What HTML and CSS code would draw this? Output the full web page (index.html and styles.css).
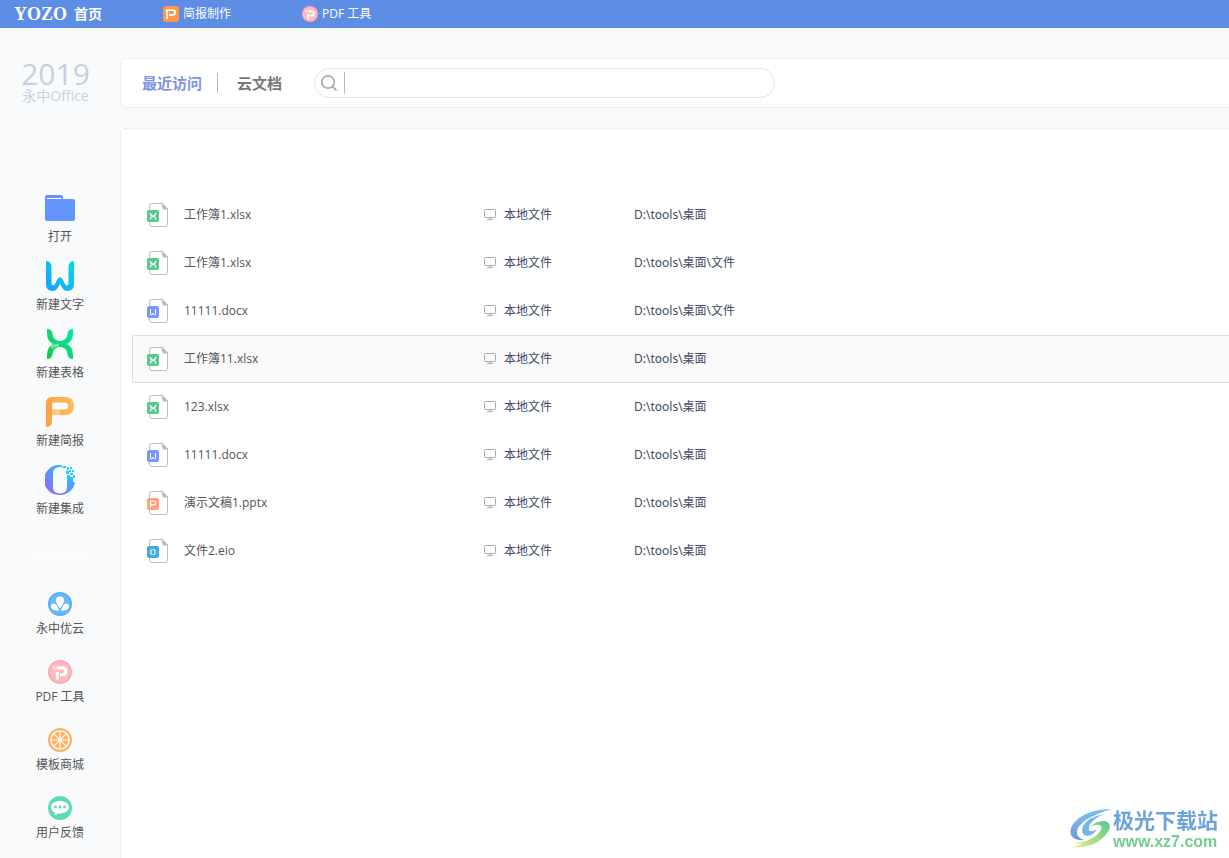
FILE: index.html
```html
<!DOCTYPE html>
<html lang="zh-CN">
<head>
<meta charset="utf-8">
<meta name="viewport" content="width=device-width, initial-scale=1">
<title>永中Office</title>
<link rel="stylesheet" href="styles.css">
</head>
<body>
<svg class="sprite" aria-hidden="true">
  <defs>
    <linearGradient id="gw" gradientUnits="userSpaceOnUse" x1="0" y1="30" x2="30" y2="0"><stop offset="0" stop-color="#1a9dff"/><stop offset="1" stop-color="#00e0dc"/></linearGradient>
    <linearGradient id="gx" gradientUnits="userSpaceOnUse" x1="0" y1="30" x2="30" y2="0"><stop offset="0" stop-color="#18c93c"/><stop offset="1" stop-color="#00e8b4"/></linearGradient>
    <linearGradient id="gp" x1="0" y1="0" x2="1" y2="0"><stop offset="0" stop-color="#ff9f45"/><stop offset="1" stop-color="#ffbe5c"/></linearGradient>
    <linearGradient id="go" x1="0" y1="1" x2="1" y2="0"><stop offset="0" stop-color="#a45cff"/><stop offset=".45" stop-color="#5b93fa"/><stop offset="1" stop-color="#1cd0f5"/></linearGradient>
    <linearGradient id="gs" x1="0" y1="0" x2="0" y2="1"><stop offset="0" stop-color="#7fc0ec"/><stop offset="1" stop-color="#6d9bd8"/></linearGradient>
    <linearGradient id="gg" x1="0" y1="1" x2="1" y2="0"><stop offset="0" stop-color="#e8ee80"/><stop offset=".7" stop-color="#7fd38a"/><stop offset="1" stop-color="#52cb92"/></linearGradient>
    <symbol id="page" viewBox="0 0 22 24">
      <path d="M2.500 8V3a2.500 2.500 0 0 1 2.500-2.500H15.500L20.500 6V21a2.500 2.500 0 0 1-2.500 2.500H5A2.500 2.500 0 0 1 2.500 21V18" fill="#fff" stroke="#bdbdc1"/>
      <path d="M15.500.5 20.500 6H17a1.500 1.500 0 0 1-1.500-1.500z" fill="#bdbdc1" stroke="#bdbdc1"/>
    </symbol>
    <symbol id="xls" viewBox="0 0 22 24"><use href="#page"/><rect y="7" width="12" height="12" rx="2" fill="#5cc691"/><path d="M3.300 10Q3.500 13 6 13T8.700 10M3.300 16.500Q3.500 13.500 6 13.500T8.700 16.500" fill="none" stroke="#fff" stroke-width="1.200"/></symbol>
    <symbol id="doc" viewBox="0 0 22 24"><use href="#page"/><rect y="7" width="12" height="12" rx="2" fill="#7799ff"/><path d="M3.500 10v5q0 1 1 1t1.500-2q.5 2 1.500 2t1-1v-5" fill="none" stroke="#fff"/></symbol>
    <symbol id="ppt" viewBox="0 0 22 24"><use href="#page"/><rect y="7" width="12" height="12" rx="2" fill="#ffa17d"/><path d="M3.600 16.500v-6.500h3.300q1.800 0 1.800 1.900t-1.800 1.900h-3" fill="none" stroke="#fff" stroke-width="1.200"/></symbol>
    <symbol id="eio" viewBox="0 0 22 24"><use href="#page"/><rect y="7" width="12" height="12" rx="2" fill="#3facdf"/><ellipse cx="6" cy="13" rx="2.800" ry="3.100" fill="#fff"/><ellipse cx="6" cy="13" rx="1.700" ry="2.500" fill="#3facdf"/></symbol>
    <symbol id="pc" viewBox="0 0 12 12"><rect x=".5" y=".5" width="11" height="8" rx="1" fill="none" stroke="#a9a9a9"/><path d="M6 8.500v2M3 10.500h6" fill="none" stroke="#a9a9a9"/></symbol>
    <symbol id="pdf" viewBox="0 0 24 24"><circle cx="12" cy="12" r="12" fill="#ffa9b1"/><circle cx="12" cy="12" r="10.300" fill="#ffb9c1"/><path d="M9.400 19.500v-7.500M8.500 8H14q3.800 0 3.800 3.400t-3.800 3.400h-2" fill="none" stroke="#fff" stroke-width="3"/><path d="M4 6h1.500v1H4zM6 7h1.500v1.500H6zM5.500 9h1v1h-1z" fill="#fff"/></symbol>
  </defs>
</svg>

<header class="topbar">
  <a class="home" href="#"><span class="brand">YOZO</span><span class="home-text">首页</span></a>
  <a class="app-tab" href="#">
    <svg class="icon16" viewBox="0 0 16 16"><rect width="16" height="16" rx="3" fill="#ff9749"/><path d="M4 13V4.200h5.500q2.700 0 2.700 2.400T9.500 9H6" fill="none" stroke="#fff" stroke-width="1.800"/></svg>
    <span>简报制作</span>
  </a>
  <a class="app-tab" href="#">
    <svg class="icon16"><use href="#pdf"/></svg>
    <span>PDF 工具</span>
  </a>
</header>

<div class="shell">
  <aside class="sidebar">
    <div class="product"><span class="year">2019</span><span class="name">永中Office</span></div>
    <nav class="actions">
      <button class="action" type="button">
        <svg class="icon30" viewBox="0 0 30 30"><path d="M2 2h14q2 0 2 2v2h10q2 0 2 2v18q0 2-2 2H2q-2 0-2-2V4q0-2 2-2z" fill="#6495ff"/><path d="M2 5.500h14.500" stroke="#fff"/></svg>
        <span>打开</span>
      </button>
      <button class="action" type="button">
        <svg class="icon30" viewBox="0 0 30 30"><path d="M1 0q5.500 0 5.500 6v15q0 3.500 1.500 3.500t3-3q1.500-5 4-5t4 5q1.500 3 3 3t1.500-3.500V6q0-6 5.500-6v23q0 7-6.500 7-3.500 0-5.500-3.500L15 23l-2 3.500Q11 30 7.500 30 1 30 1 23z" fill="url(#gw)"/></svg>
        <span>新建文字</span>
      </button>
      <button class="action" type="button">
        <svg class="icon30" viewBox="0 0 30 30"><path d="M2 0q5 0 5.500 5 1 7 7.500 7t7.500-7q.5-5 5.500-5v4q0 8-6 11 6 3 6 11v4q-5 0-5.500-5-1-7-7.500-7t-7.500 7q-.5 5-5.500 5v-4q0-8 6-11-6-3-6-11z" fill="url(#gx)"/><path d="M6 18.500q3-2.500 8-2.500" stroke="#fff" stroke-width="3" opacity=".4" fill="none"/></svg>
        <span>新建表格</span>
      </button>
      <button class="action" type="button">
        <svg class="icon30" viewBox="0 0 30 30"><path d="M1 30V6q0-6 6-6h13q9 0 9 9t-9 9H7v6q0 6-6 6zM7 12.500h12.500q3.500 0 3.500-3.500t-3.500-3.500H9q-2 0-2 2z" fill="url(#gp)"/><path d="M7 12.500h8v5.500H7z" fill="#fff" opacity=".35"/></svg>
        <span>新建简报</span>
      </button>
      <button class="action" type="button">
        <svg class="icon30" viewBox="0 0 30 30"><path d="M14 0a15 15 0 0 0 0 30h2A15 15 0 0 0 30 17h-2v-3h-2v-2h-4V5h-3V2h-5z" fill="url(#go)"/><path d="M15 2q-7 0-7 7v13q0 6.500 7 6.500t7-6.500V9q0-7-7-7z" fill="#f8fafc"/><path d="M14 0h3v2h-3zM18 1h3v2h-3zM22 2h2v3h-2zM25 2h2v2h-2zM24 5h2v2h-2zM21 6h3v3h-3zM27 5h2v2h-2zM25 8h3v2h-3zM22 10h3v2h-3zM28 10h2v3h-2zM25 12h3v2h-3zM22 13h2v3h-2z" fill="#25cdf5"/></svg>
        <span>新建集成</span>
      </button>
    </nav>
    <hr class="rule">
    <nav class="services">
      <button class="action" type="button">
        <svg class="icon24" viewBox="0 0 24 24"><circle cx="12" cy="12" r="12" fill="#58adf2"/><circle cx="12" cy="12" r="10.500" fill="#66bcf8"/><path d="M12 16.500q-4-5-4-8a4 4 0 0 1 8 0q0 3-4 8zM11 18.800q-8 0-8-4 0-3.300 3-3.300 3 0 5 7.300zM13 18.800q8 0 8-4 0-3.300-3-3.300-3 0-5 7.300z" fill="#fff"/></svg>
        <span>永中优云</span>
      </button>
      <button class="action" type="button">
        <svg class="icon24"><use href="#pdf"/></svg>
        <span>PDF 工具</span>
      </button>
      <button class="action" type="button">
        <svg class="icon24" viewBox="0 0 24 24"><circle cx="12" cy="12" r="12" fill="#ffb163"/><circle cx="12" cy="12" r="9.800" fill="#fff"/><circle cx="12" cy="12" r="5.200" fill="none" stroke="#ffb163" stroke-width="6.400"/><path d="M12 3v18M3 12h18M5.600 5.600l12.800 12.800M18.400 5.600 5.600 18.400" stroke="#fff" stroke-width="1.200"/><circle cx="12" cy="12" r="2" fill="#fff"/></svg>
        <span>模板商城</span>
      </button>
      <button class="action" type="button">
        <svg class="icon24" viewBox="0 0 24 24"><circle cx="12" cy="12" r="12" fill="#5bdbb6"/><path d="M12 5c5 0 9 2.500 9 6s-4 6.500-9 6.500h-2q-1.500 1.700-4 1.700l1-2.500C4.500 15.500 3 13.500 3 11c0-3.500 4-6 9-6z" fill="#fff"/><circle cx="7.500" cy="11" r="1.400" fill="#5bdbb6"/><circle cx="12" cy="11" r="1.400" fill="#5bdbb6"/><circle cx="16.500" cy="11" r="1.400" fill="#5bdbb6"/></svg>
        <span>用户反馈</span>
      </button>
    </nav>
  </aside>

  <main class="content">
    <section class="panel toolbar">
      <button class="tab tab-active" type="button">最近访问</button>
      <button class="tab" type="button">云文档</button>
      <label class="search">
        <svg class="icon16" viewBox="0 0 16 16"><circle cx="7" cy="7" r="6.200" fill="none" stroke="#acacac" stroke-width="1.700"/><path d="M11.500 11.500 15.500 15.500" stroke="#acacac" stroke-width="1.800"/></svg>
        <input type="text" aria-label="搜索">
      </label>
    </section>
    <section class="panel recent">
      <table class="files">
        <colgroup><col class="c-name"><col class="c-place"><col></colgroup>
        <tbody>
          <tr><td><div class="cell"><svg class="file"><use href="#xls"/></svg>工作簿1.xlsx</div></td><td><div class="cell place"><svg class="pc"><use href="#pc"/></svg>本地文件</div></td><td class="path">D:\tools\桌面</td></tr>
          <tr><td><div class="cell"><svg class="file"><use href="#xls"/></svg>工作簿1.xlsx</div></td><td><div class="cell place"><svg class="pc"><use href="#pc"/></svg>本地文件</div></td><td class="path">D:\tools\桌面\文件</td></tr>
          <tr><td><div class="cell"><svg class="file"><use href="#doc"/></svg>11111.docx</div></td><td><div class="cell place"><svg class="pc"><use href="#pc"/></svg>本地文件</div></td><td class="path">D:\tools\桌面\文件</td></tr>
          <tr class="selected"><td><div class="cell"><svg class="file"><use href="#xls"/></svg>工作簿11.xlsx</div></td><td><div class="cell place"><svg class="pc"><use href="#pc"/></svg>本地文件</div></td><td class="path">D:\tools\桌面</td></tr>
          <tr><td><div class="cell"><svg class="file"><use href="#xls"/></svg>123.xlsx</div></td><td><div class="cell place"><svg class="pc"><use href="#pc"/></svg>本地文件</div></td><td class="path">D:\tools\桌面</td></tr>
          <tr><td><div class="cell"><svg class="file"><use href="#doc"/></svg>11111.docx</div></td><td><div class="cell place"><svg class="pc"><use href="#pc"/></svg>本地文件</div></td><td class="path">D:\tools\桌面</td></tr>
          <tr><td><div class="cell"><svg class="file"><use href="#ppt"/></svg>演示文稿1.pptx</div></td><td><div class="cell place"><svg class="pc"><use href="#pc"/></svg>本地文件</div></td><td class="path">D:\tools\桌面</td></tr>
          <tr><td><div class="cell"><svg class="file"><use href="#eio"/></svg>文件2.eio</div></td><td><div class="cell place"><svg class="pc"><use href="#pc"/></svg>本地文件</div></td><td class="path">D:\tools\桌面</td></tr>
        </tbody>
      </table>
    </section>
  </main>
</div>

<div class="watermark">
  <svg class="swirl" viewBox="0 0 44 42"><path d="M43 1Q22 1 10 10-1 19 2 27q3 6 13 5-8-3-7-9Q10 11 43 1z" fill="url(#gs)"/><path d="M35 6Q19 9 14 18q-3 9 4 10 7-1 10-7-6 4-8 1-2-8 15-16z" fill="#74b6e6"/><path d="M21 19q7-7 15-6 7 2 4 9-6 11-18 15-10 3-20 2 8-1 12-4-5 1-9 0 15-1 23-8 6-6 4-9-3-3-11 1z" fill="url(#gg)"/></svg>
  <div class="mark-text"><span class="mark-name">极光下载站</span><span class="mark-url">www.xz7.com</span></div>
</div>
</body>
</html>
```

FILE: styles.css
```css
* { box-sizing: border-box; }

body {
  margin: 0;
  min-height: 100vh;
  display: flex;
  flex-direction: column;
  overflow-x: hidden;
  background: #f8fafc;
  color: #555;
  font: 12px/16px "Open Sans", "Noto Sans CJK SC", sans-serif;
}

button, input { font: inherit; color: inherit; }
button { border: 0; padding: 0; background: none; cursor: pointer; }
a { color: inherit; text-decoration: none; }
svg { display: block; flex: none; }

.sprite { position: absolute; width: 0; height: 0; }
.icon16 { width: 16px; height: 16px; }
.icon24 { width: 24px; height: 24px; }
.icon30 { width: 30px; height: 30px; }

.topbar {
  display: flex;
  align-items: center;
  height: 28px;
  padding-left: 14px;
  background: #5e8de6;
  color: #fff;
}
.home { display: flex; align-items: center; width: 149px; gap: 7px; }
.brand { font: bold 18px/28px "Liberation Serif", serif; }
.home-text { font-size: 14px; line-height: 18px; font-weight: bold; }
.app-tab { display: flex; align-items: center; gap: 4px; width: 139px; line-height: 18px; }

.shell { display: flex; flex: 1; }

.sidebar { width: 120px; flex: none; display: flex; flex-direction: column; }
.product {
  display: flex;
  flex-direction: column;
  align-items: center;
  height: 165px;
  padding: 30px 9px 0 0;
  color: #c8d0dd;
}
.year { font-size: 30px; line-height: 32px; }
.name { font-size: 14px; line-height: 12px; }
.actions, .services { display: flex; flex-direction: column; }
.action {
  display: flex;
  flex-direction: column;
  align-items: center;
  gap: 6px;
  height: 68px;
}
.services .action { gap: 5px; }
.rule { width: 60px; height: 1px; margin: 20px auto 38px; border: 0; background: #fff; }

.content { flex: 1; min-width: 0; display: flex; flex-direction: column; gap: 20px; padding-top: 30px; }
.panel {
  border: 1px solid #eceef0;
  border-right: 0;
  border-radius: 5px 0 0 5px;
  background: #fff;
}
.toolbar { display: flex; align-items: center; height: 50px; padding-left: 21px; }
.tab { font-size: 15px; line-height: 20px; font-weight: bold; color: #777; }
.tab-active { color: #7d93e6; padding-right: 15px; border-right: 1px solid #b5b9be; margin-right: 19px; }
.search {
  display: flex;
  align-items: center;
  gap: 7px;
  width: 461px;
  height: 30px;
  margin-left: 32px;
  padding: 0 16px 0 6px;
  border: 1px solid #e3e3e5;
  border-radius: 15px;
}
.search input {
  flex: 1;
  min-width: 0;
  height: 22px;
  padding: 0 6px;
  border: 0;
  border-left: 1px solid #b4bac4;
  outline: 0;
  background: none;
}

.recent { flex: 1; border-bottom: 0; border-bottom-left-radius: 0; padding: 62px 0 0 11px; }
.files { width: 100%; border-collapse: separate; border-spacing: 0; table-layout: fixed; }
.c-name { width: 352px; }
.c-place { width: 150px; }
.files td { height: 48px; padding: 0; border: 1px solid transparent; border-width: 1px 0; }
.files td:first-child { padding-left: 14px; border-left-width: 1px; }
.files .selected td { background: #f9f9f9; border-color: #dfdfe0; }
.cell { display: flex; align-items: center; gap: 15px; }
.file { width: 22px; height: 24px; }
.place { gap: 8px; color: #3d4b66; }
.pc { width: 12px; height: 12px; }
.path { color: #3d4b66; font-family: "Noto Sans", "Noto Sans CJK SC", sans-serif; }

.watermark { position: fixed; right: 11px; bottom: 7px; display: flex; align-items: center; }
.swirl { width: 44px; height: 42px; }
.mark-text { display: flex; flex-direction: column; }
.mark-name { font-size: 21px; line-height: 26px; font-weight: bold; color: #6ba3da; }
.mark-url { font: bold 16px/18px "Liberation Sans", sans-serif; color: #72cd90; }
```
